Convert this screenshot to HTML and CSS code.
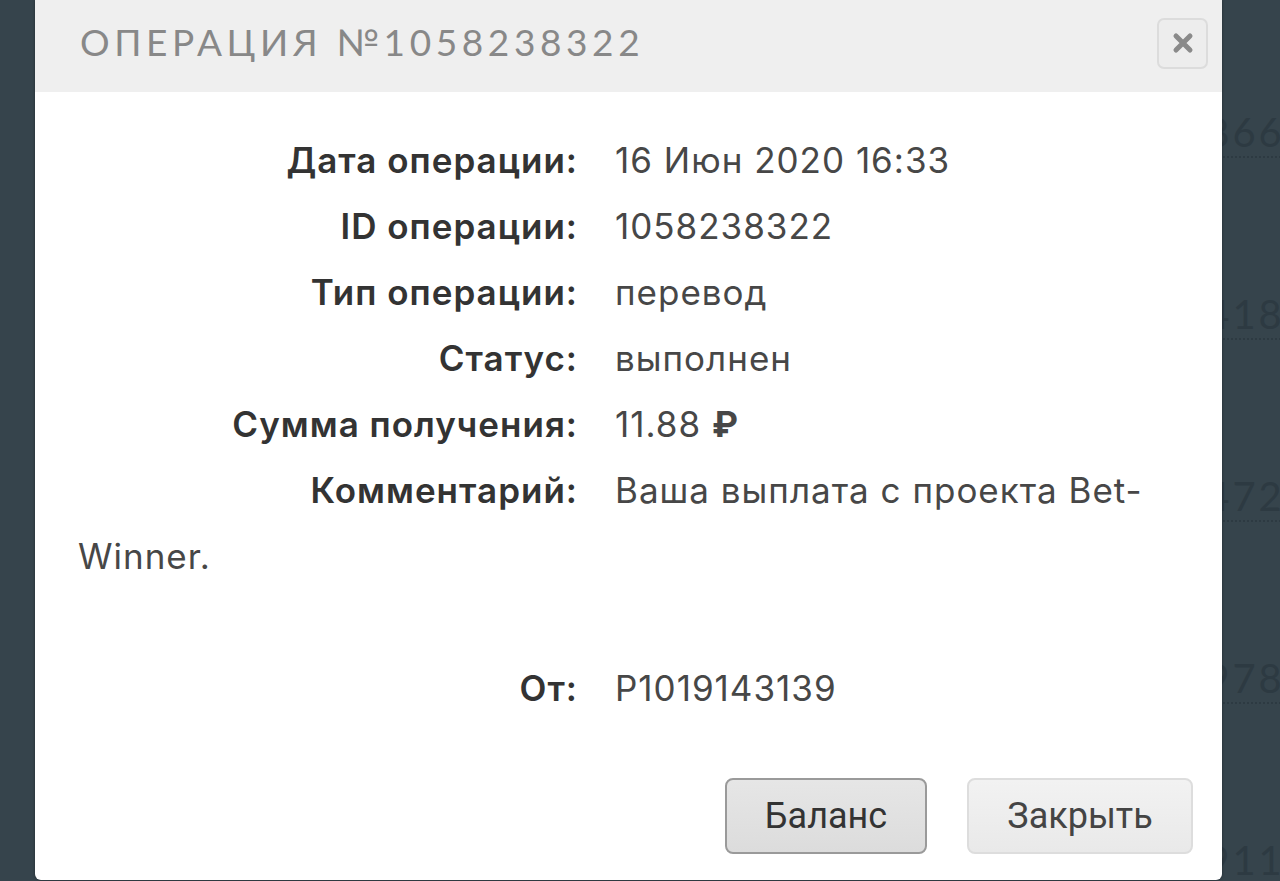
FILE: index.html
```html
<!DOCTYPE html>
<html>
<head>
  <meta charset="utf-8">
  <title>Операция №1058238322</title>
  <link rel="stylesheet" href="styles.css">
</head>
<body>
  <!-- history table behind the dialog -->
  <div class="history">
    <div class="history-row"><span class="num">4866</span></div>
    <div class="history-row"><span class="num">3418</span></div>
    <div class="history-row"><span class="num">1472</span></div>
    <div class="history-row"><span class="num">2978</span></div>
    <div class="history-row last"><span class="num">5911</span></div>
  </div>

  <div class="dialog">
    <div class="dialog-head">
      <span class="dialog-title">Операция №1058238322</span>
      <button class="close-btn" title="Закрыть">
        <svg viewBox="0 0 24 24" width="24" height="24">
          <path d="M5 5 L19 19 M19 5 L5 19" stroke="#8a8a8a" stroke-width="5" stroke-linecap="round"/>
        </svg>
      </button>
    </div>

    <div class="dialog-body">
      <div class="row"><span class="label">Дата операции:</span><span class="value">16 Июн 2020 16:33</span></div>
      <div class="row"><span class="label">ID операции:</span><span class="value">1058238322</span></div>
      <div class="row"><span class="label">Тип операции:</span><span class="value">перевод</span></div>
      <div class="row"><span class="label">Статус:</span><span class="value">выполнен</span></div>
      <div class="row"><span class="label">Сумма получения:</span><span class="value">11.88 <b class="rub">₽</b></span></div>
      <div class="row"><span class="label">Комментарий:</span><span class="value">Ваша выплата с проекта Bet-Winner.<br><br></span></div>
      <div class="row"><span class="label">От:</span><span class="value">P1019143139</span></div>
    </div>

    <div class="dialog-foot">
      <button class="btn btn-active">Баланс</button>
      <button class="btn">Закрыть</button>
    </div>
  </div>
</body>
</html>
```

FILE: styles.css
```css
html, body {
  margin: 0;
  height: 100%;
}
body {
  background: #36444c;
  overflow: hidden;
  font-family: Inter, "Open Sans", sans-serif;
  position: relative;
}

/* BACKGROUND TABLE */
.history {
  padding-top: 108px;
}
.history-row {
  height: 182px;
}
.history-row.last {
  height: 40px;
  overflow: hidden;
}
.history-row .num {
  display: inline-block;
  margin-left: 1180px;
  font-family: Lato, sans-serif;
  font-size: 40px;
  line-height: 48px;
  letter-spacing: 3px;
  color: #2d3a42;
  border-bottom: 2px dotted #2d3a42;
}

/* DIALOG */
.dialog {
  position: absolute;
  top: 0;
  left: 35px;
  width: 1187px;
  height: 880px;
  background: #fff;
  border-radius: 0 0 6px 6px;
  box-shadow: 0 0 3px rgba(0, 0, 0, 0.4);
}

.dialog-head {
  height: 92px;
  background: #efefef;
  display: flex;
  align-items: center;
  justify-content: space-between;
  padding: 0 14px 0 45px;
}
.dialog-title {
  font-family: Lato, sans-serif;
  font-size: 37px;
  letter-spacing: 4.6px;
  text-transform: uppercase;
  color: #888;
  margin-top: -10px;
}
.close-btn {
  width: 51px;
  height: 51px;
  margin-top: -6px;
  border: 2px solid #dcdcdc;
  border-radius: 7px;
  background: #ededed;
  display: flex;
  align-items: center;
  justify-content: center;
  padding: 0;
}

.dialog-body {
  padding: 35px 43px 0 43px;
  font-size: 35px;
  letter-spacing: 1px;
  line-height: 66px;
}
.row .label {
  display: inline-block;
  width: 500px;
  margin-right: 37px;
  text-align: right;
  font-weight: 600;
  color: #333;
}
.row .value {
  color: #474747;
}
.rub {
  font-weight: 700;
}

.dialog-foot {
  display: flex;
  justify-content: flex-end;
  gap: 40px;
  padding: 57px 29px 0 0;
}
.btn {
  height: 76px;
  padding: 0 36px;
  font-family: Roboto, sans-serif;
  font-size: 36px;
  color: #444;
  background: linear-gradient(#f2f2f2, #e9e9e9);
  border: 2px solid #dddddd;
  border-radius: 8px;
}
.btn-active {
  color: #333;
  width: 202px;
  background: linear-gradient(#e6e6e6, #dcdcdc);
  border-color: #9a9a9a;
}
.btn:last-child {
  width: 226px;
}
```
